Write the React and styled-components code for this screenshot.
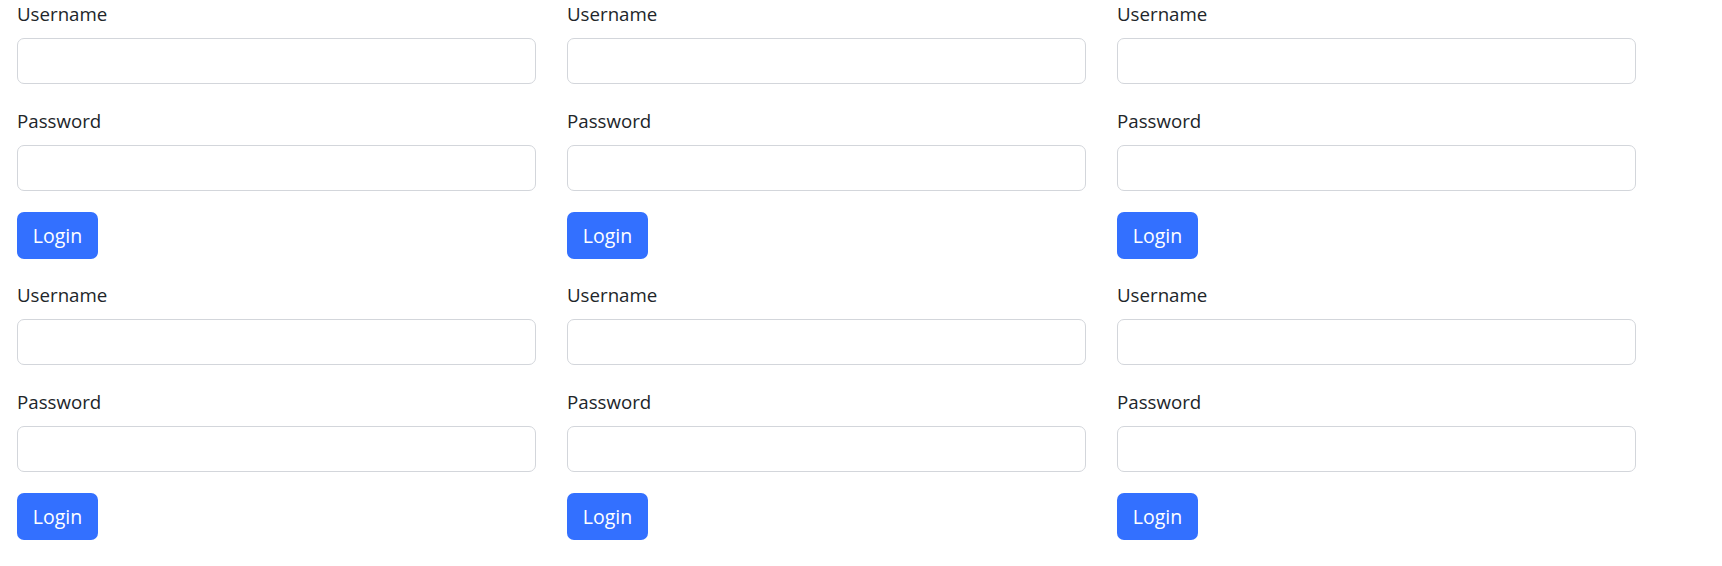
import React from "react";
import styled, { createGlobalStyle } from "styled-components";

const Global = createGlobalStyle`
  html, body { margin: 0; padding: 0; background: #ffffff; }
  body {
    font-family: "Open Sans", "Noto Sans", "Liberation Sans", sans-serif;
    color: #212529;
  }
  * { box-sizing: border-box; }
`;

const Grid = styled.div`
  display: grid;
  grid-template-columns: repeat(3, 519px);
  column-gap: 31px;
  row-gap: 22px;
  padding-left: 17px;
`;

const Form = styled.form`
  display: flex;
  flex-direction: column;
  align-items: flex-start;
`;

const Field = styled.div`
  display: flex;
  flex-direction: column;
  width: 100%;
  margin-bottom: ${(p) => p.$gap}px;
`;

const Label = styled.label`
  display: block;
  font-size: 18.7px;
  line-height: 27px;
  height: 27px;
  margin-bottom: 11px;
  color: #212529;
`;

const Input = styled.input`
  display: block;
  width: 100%;
  height: 46px;
  padding: 7px 14px;
  font-size: 18px;
  font-family: inherit;
  border: 1px solid #d3d6db;
  border-radius: 7px;
  background: #fff;
  outline: none;
`;

const Button = styled.button`
  height: 47px;
  width: 81px;
  padding: 0;
  border: none;
  border-radius: 7px;
  background: #3370ff;
  color: #ffffff;
  font-family: inherit;
  font-size: 19.5px;
  line-height: 47px;
  cursor: pointer;
`;

function LoginForm() {
  return (
    <Form onSubmit={(e) => e.preventDefault()}>
      <Field $gap={23}>
        <Label>Username</Label>
        <Input type="text" />
      </Field>
      <Field $gap={21}>
        <Label>Password</Label>
        <Input type="password" />
      </Field>
      <Button type="submit">Login</Button>
    </Form>
  );
}

export default function App() {
  return (
    <>
      <Global />
      <Grid>
        {Array.from({ length: 6 }).map((_, i) => (
          <LoginForm key={i} />
        ))}
      </Grid>
    </>
  );
}
